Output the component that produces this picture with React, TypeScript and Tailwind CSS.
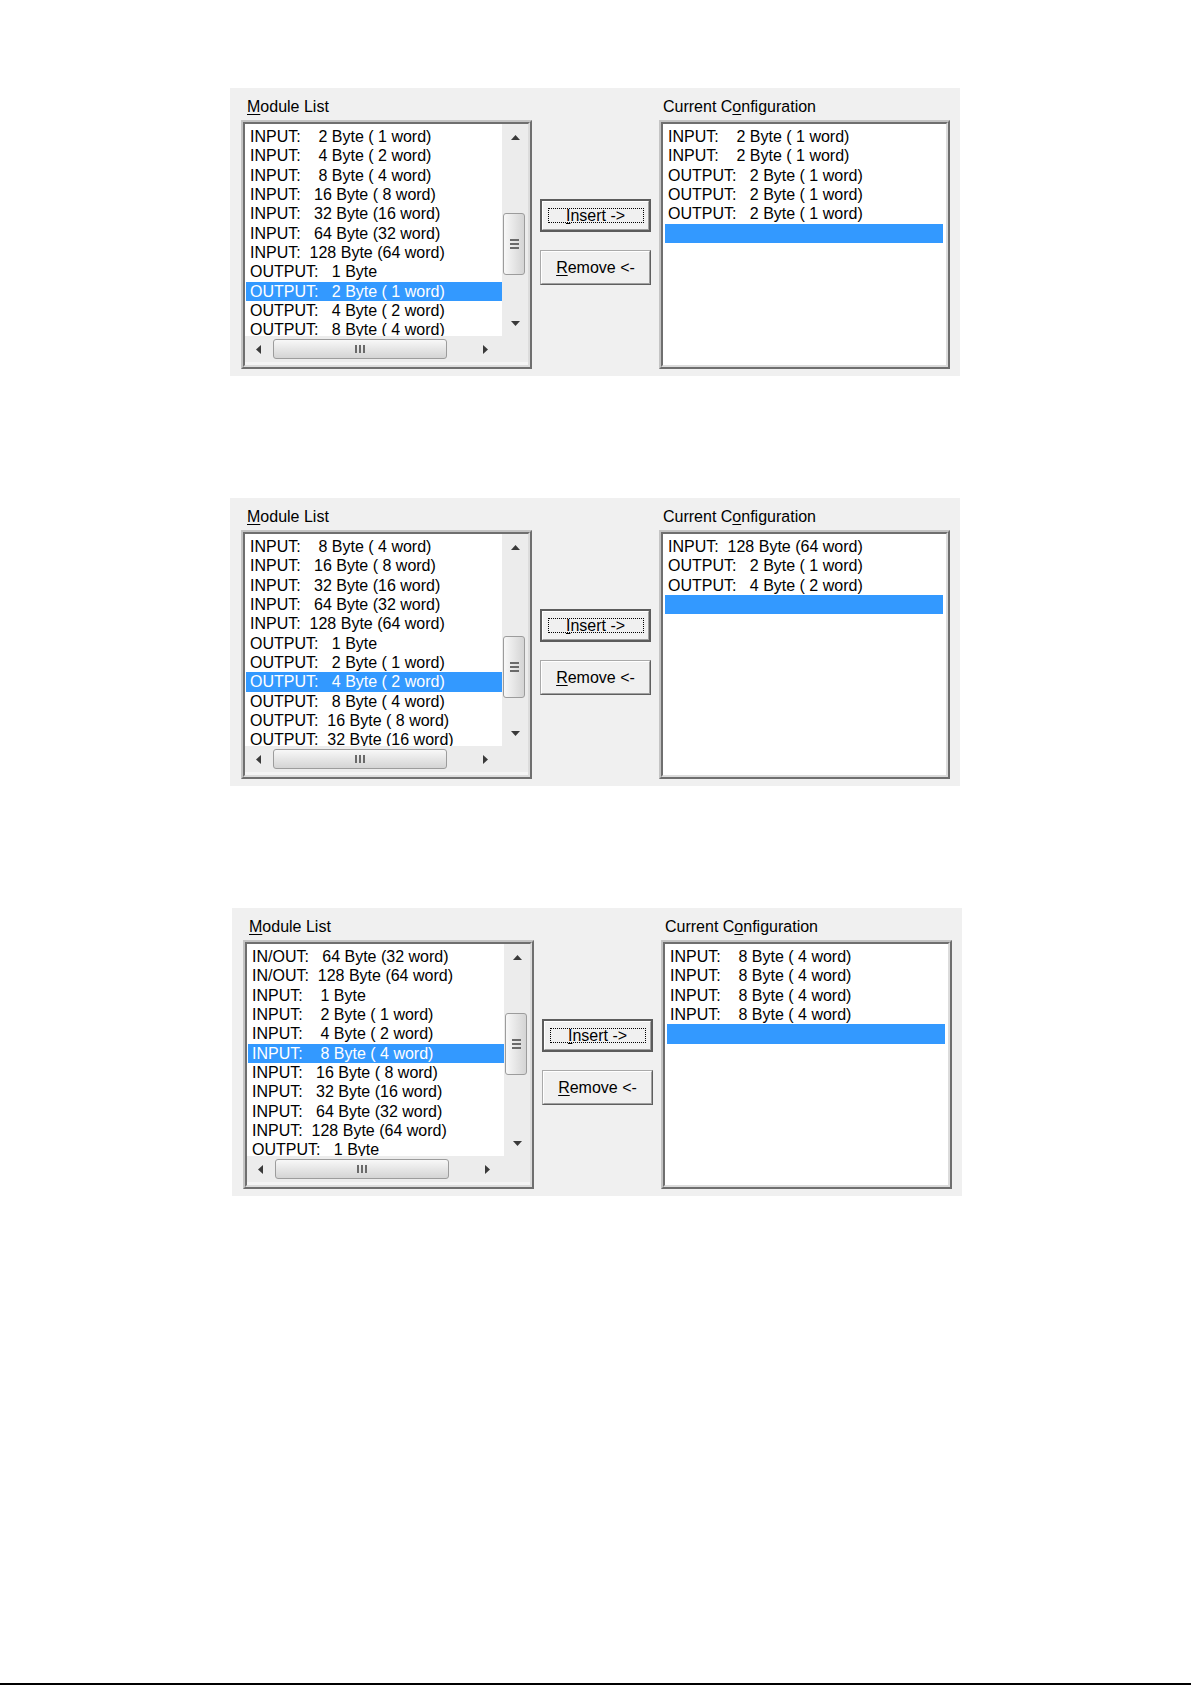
type PanelData = {
  modules: string[];
  selected: number;
  config: string[];
  thumb: string;
  shift: string;
};

const panels: PanelData[] = [
  {
    modules: [
      'INPUT:    2 Byte ( 1 word)',
      'INPUT:    4 Byte ( 2 word)',
      'INPUT:    8 Byte ( 4 word)',
      'INPUT:   16 Byte ( 8 word)',
      'INPUT:   32 Byte (16 word)',
      'INPUT:   64 Byte (32 word)',
      'INPUT:  128 Byte (64 word)',
      'OUTPUT:   1 Byte',
      'OUTPUT:   2 Byte ( 1 word)',
      'OUTPUT:   4 Byte ( 2 word)',
      'OUTPUT:   8 Byte ( 4 word)',
    ],
    selected: 8,
    config: [
      'INPUT:    2 Byte ( 1 word)',
      'INPUT:    2 Byte ( 1 word)',
      'OUTPUT:   2 Byte ( 1 word)',
      'OUTPUT:   2 Byte ( 1 word)',
      'OUTPUT:   2 Byte ( 1 word)',
    ],
    thumb: 'mt-[63px]',
    shift: 'ml-[230px]',
  },
  {
    modules: [
      'INPUT:    8 Byte ( 4 word)',
      'INPUT:   16 Byte ( 8 word)',
      'INPUT:   32 Byte (16 word)',
      'INPUT:   64 Byte (32 word)',
      'INPUT:  128 Byte (64 word)',
      'OUTPUT:   1 Byte',
      'OUTPUT:   2 Byte ( 1 word)',
      'OUTPUT:   4 Byte ( 2 word)',
      'OUTPUT:   8 Byte ( 4 word)',
      'OUTPUT:  16 Byte ( 8 word)',
      'OUTPUT:  32 Byte (16 word)',
    ],
    selected: 7,
    config: [
      'INPUT:  128 Byte (64 word)',
      'OUTPUT:   2 Byte ( 1 word)',
      'OUTPUT:   4 Byte ( 2 word)',
    ],
    thumb: 'mt-[76px]',
    shift: 'ml-[230px]',
  },
  {
    modules: [
      'IN/OUT:   64 Byte (32 word)',
      'IN/OUT:  128 Byte (64 word)',
      'INPUT:    1 Byte',
      'INPUT:    2 Byte ( 1 word)',
      'INPUT:    4 Byte ( 2 word)',
      'INPUT:    8 Byte ( 4 word)',
      'INPUT:   16 Byte ( 8 word)',
      'INPUT:   32 Byte (16 word)',
      'INPUT:   64 Byte (32 word)',
      'INPUT:  128 Byte (64 word)',
      'OUTPUT:   1 Byte',
    ],
    selected: 5,
    config: [
      'INPUT:    8 Byte ( 4 word)',
      'INPUT:    8 Byte ( 4 word)',
      'INPUT:    8 Byte ( 4 word)',
      'INPUT:    8 Byte ( 4 word)',
    ],
    thumb: 'mt-[43px]',
    shift: 'ml-[232px]',
  },
];

const row = 'h-[19.33px] leading-[19.33px] whitespace-pre';

function Arrow({ dir }: { dir: 'up' | 'down' | 'left' | 'right' }) {
  const pts = {
    up: '0,5 4.5,0 9,5',
    down: '0,0 9,0 4.5,5',
    left: '5,0 5,9 0,4.5',
    right: '0,0 5,4.5 0,9',
  }[dir];
  const vertical = dir === 'up' || dir === 'down';
  return (
    <svg width={vertical ? 9 : 5} height={vertical ? 5 : 9} viewBox={vertical ? '0 0 9 5' : '0 0 5 9'}>
      <polygon points={pts} fill="#3a3a3a" />
    </svg>
  );
}

function Frame({ children }: { children: React.ReactNode }) {
  return (
    <div className="h-[249px] border-2 border-t-[#c4c4c4] border-l-[#c4c4c4] border-r-[#6f6f6f] border-b-[#6f6f6f]">
      <div className="h-full border-2 border-t-[#6f6f6f] border-l-[#6f6f6f] border-r-[#dcdcdc] border-b-[#dcdcdc] bg-white">
        {children}
      </div>
    </div>
  );
}

function VScroll({ thumb }: { thumb: string }) {
  return (
    <div className="w-[26px] bg-[#ececec] flex flex-col">
      <div className="h-[26px] flex items-center justify-center">
        <Arrow dir="up" />
      </div>
      <div className={`${thumb} ml-[1px] mr-[3px] h-[62px] rounded-[3px] border border-[#9c9c9c] bg-linear-to-r from-[#f8f8f8] to-[#d4d4d4] flex flex-col items-center justify-center gap-[2px]`}>
        <div className="w-[9px] h-[2px] bg-[#6a6a6a]" />
        <div className="w-[9px] h-[2px] bg-[#6a6a6a]" />
        <div className="w-[9px] h-[2px] bg-[#6a6a6a]" />
      </div>
      <div className="flex-1" />
      <div className="h-[26px] flex items-center justify-center">
        <Arrow dir="down" />
      </div>
    </div>
  );
}

function HScroll() {
  return (
    <div className="h-[29px] flex flex-col bg-[#ececec]">
      <div className="h-[26px] flex">
        <div className="flex-1 flex items-center pr-[4px]">
          <div className="w-[26px] flex justify-center">
            <Arrow dir="left" />
          </div>
          <div className="ml-[2px] w-[174px] h-[20px] rounded-[3px] border border-[#9c9c9c] bg-linear-to-b from-[#f8f8f8] to-[#d4d4d4] flex items-center justify-center gap-[2px]">
            <div className="h-[8px] w-[2px] bg-[#6a6a6a]" />
            <div className="h-[8px] w-[2px] bg-[#6a6a6a]" />
            <div className="h-[8px] w-[2px] bg-[#6a6a6a]" />
          </div>
          <div className="flex-1" />
          <div className="w-[26px] flex justify-center">
            <Arrow dir="right" />
          </div>
        </div>
        <div className="w-[26px]" />
      </div>
      <div className="h-[3px] bg-[#f4f4f4]" />
    </div>
  );
}

function Panel({ data }: { data: PanelData }) {
  return (
    <div className={`${data.shift} w-[730px] h-[288px] bg-[#f0f0f0] flex gap-[8px] pl-[11px] pr-[10px] pt-[9px] pb-[7px]`}>
      <div className="w-[291px] flex flex-col">
        <div className="h-[19px] leading-[19px] pl-[6px] mb-[4px]">
          <span className="underline underline-offset-2">M</span>odule List
        </div>
        <Frame>
          <div className="h-full flex flex-col">
            <div className="flex-1 min-h-0 flex">
              <div className="flex-1 overflow-hidden pt-[3px]">
                {data.modules.map((m, i) => (
                  <div
                    key={i}
                    className={`${row} ml-[1px] pl-[4px] ${i === data.selected ? 'bg-[#3399ff] text-white' : ''}`}
                  >
                    {m}
                  </div>
                ))}
              </div>
              <VScroll thumb={data.thumb} />
            </div>
            <HScroll />
          </div>
        </Frame>
      </div>

      <div className="w-[111px] flex flex-col pt-[102px] gap-[18px]">
        <div className="h-[33px] border-2 border-[#5c5c5c]">
          <div className="h-full border border-t-white border-l-white border-r-[#a0a0a0] border-b-[#a0a0a0] bg-[#f0f0f0] flex items-center justify-center">
            <div className="w-[96px] h-[15px] leading-[13px] border border-dotted border-black text-center">
              <span className="underline underline-offset-2">I</span>nsert -&gt;
            </div>
          </div>
        </div>
        <div className="h-[35px] border border-t-[#a9a9a9] border-l-[#a9a9a9] border-r-[#5f5f5f] border-b-[#5f5f5f]">
          <div className="h-full border border-t-white border-l-white border-r-[#a0a0a0] border-b-[#a0a0a0] bg-[#f0f0f0] flex items-center justify-center">
            <span>
              <span className="underline underline-offset-2">R</span>emove &lt;-
            </span>
          </div>
        </div>
      </div>

      <div className="w-[291px] flex flex-col">
        <div className="h-[19px] leading-[19px] pl-[4px] mb-[4px]">
          Current C<span className="underline underline-offset-2">o</span>nfiguration
        </div>
        <Frame>
          <div className="pt-[3px]">
            {data.config.map((c, i) => (
              <div key={i} className={`${row} ml-[2px] mr-[3px] pl-[3px]`}>
                {c}
              </div>
            ))}
            <div className={`${row} ml-[2px] mr-[3px] bg-[#3399ff]`} />
          </div>
        </Frame>
      </div>
    </div>
  );
}

export default function App() {
  return (
    <div className="h-[1685px] bg-white flex flex-col font-['Liberation_Sans',Arial,sans-serif] text-[16px] text-black">
      <div className="flex flex-col pt-[88px] gap-[122px]">
        {panels.map((p, i) => (
          <Panel key={i} data={p} />
        ))}
      </div>
      <div className="mt-auto h-[2px] bg-black" />
    </div>
  );
}
